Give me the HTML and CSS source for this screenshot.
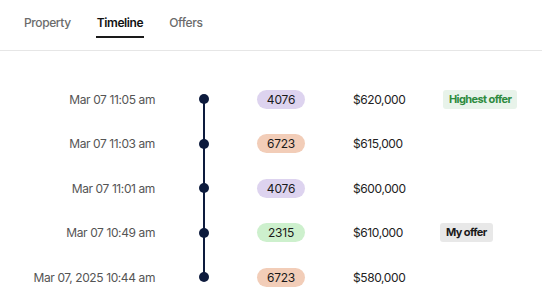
FILE: index.html
```html
<!DOCTYPE html>
<html lang="en">
<head>
    <meta charset="UTF-8">
    <meta name="viewport" content="width=device-width, initial-scale=1.0">
    <title>Timeline</title>
    <link rel="stylesheet" href="styles.css">
</head>
<body>
    <div class="tabs">
        <div class="tab">Property</div>
        <div class="tab active">Timeline</div>
        <div class="tab">Offers</div>
    </div>

    <div class="timeline">
        <div class="row first">
            <div class="date">Mar 07 11:05 am</div>
            <div class="track"><span class="dot"></span></div>
            <div class="cell"><span class="badge purple">4076</span></div>
            <div class="price">$620,000</div>
            <div class="cell"><span class="tag green">Highest offer</span></div>
        </div>
        <div class="row">
            <div class="date">Mar 07 11:03 am</div>
            <div class="track"><span class="dot"></span></div>
            <div class="cell"><span class="badge peach">6723</span></div>
            <div class="price">$615,000</div>
            <div class="cell"></div>
        </div>
        <div class="row">
            <div class="date">Mar 07 11:01 am</div>
            <div class="track"><span class="dot"></span></div>
            <div class="cell"><span class="badge purple">4076</span></div>
            <div class="price">$600,000</div>
            <div class="cell"></div>
        </div>
        <div class="row">
            <div class="date">Mar 07 10:49 am</div>
            <div class="track"><span class="dot"></span></div>
            <div class="cell"><span class="badge mint">2315</span></div>
            <div class="price">$610,000</div>
            <div class="cell"><span class="tag gray">My offer</span></div>
        </div>
        <div class="row last">
            <div class="date">Mar 07, 2025 10:44 am</div>
            <div class="track"><span class="dot"></span></div>
            <div class="cell"><span class="badge peach">6723</span></div>
            <div class="price">$580,000</div>
            <div class="cell"></div>
        </div>
    </div>
</body>
</html>
```

FILE: styles.css
```css
body {
    font-family: Inter, 'Liberation Sans', sans-serif;
    background: #ffffff;
    margin: 0;
    color: #222222;
    font-size: 12px;
    letter-spacing: -0.4px;
}

.tabs {
    display: flex;
    align-items: flex-start;
    gap: 26px;
    padding: 0 24px;
    height: 50px;
    border-bottom: 1px solid #e6e6e6;
}

.tab {
    font-weight: 500;
    color: #6b6b6b;
    padding-top: 15px;
    height: 38px;
    line-height: 16px;
    box-sizing: border-box;
    border-bottom: 2px solid transparent;
}

.tab.active {
    color: #111111;
    font-weight: 600;
    border-bottom-color: #1a1a1a;
    padding-left: 1px;
    padding-right: 1px;
    margin: 0 -1px;
}

.timeline {
    padding-top: 26px;
}

.row {
    display: grid;
    grid-template-columns: 155px 98px 100px 88px auto;
    align-items: center;
    height: 44.5px;
}

.date {
    text-align: right;
    color: #555555;
}

.track {
    position: relative;
    height: 100%;
    display: flex;
    align-items: center;
    justify-content: center;
}

.track::before {
    content: "";
    position: absolute;
    left: 48px;
    width: 2px;
    top: 0;
    bottom: 0;
    background: #0d1b3d;
}

.row.first .track::before {
    top: 50%;
}

.row.last .track::before {
    bottom: 50%;
}

.dot {
    width: 10px;
    height: 10px;
    border-radius: 50%;
    background: #0d1b3d;
    position: relative;
}

.badge {
    display: inline-block;
    margin-left: 4px;
    width: 48px;
    height: 19px;
    line-height: 19px;
    border-radius: 10px;
    text-align: center;
    color: #1a1a1a;
    font-size: 12px;
    letter-spacing: -0.2px;
}

.badge.purple {
    background: #ddd3ef;
}

.badge.peach {
    background: #f2cdb8;
}

.badge.mint {
    background: #cdf0cd;
}

.price {
    color: #222222;
}

.tag {
    display: inline-block;
    font-size: 11px;
    font-weight: 700;
    letter-spacing: -0.6px;
    padding: 0 6px;
    height: 19px;
    line-height: 19px;
    border-radius: 3px;
}

.tag.green {
    background: #e8f3ea;
    color: #2e8b3d;
    margin-left: 2px;
}

.tag.gray {
    background: #e8e8e8;
    color: #1a1a1a;
    margin-left: -1px;
}
```
